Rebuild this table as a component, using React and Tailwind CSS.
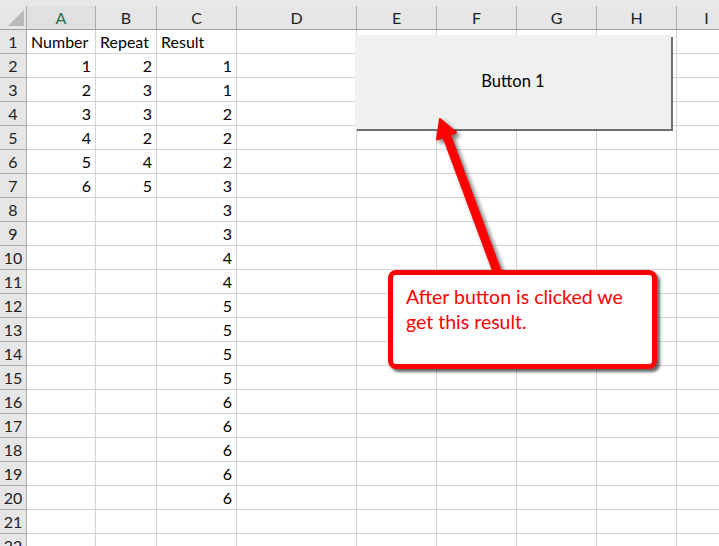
import React from 'react';

const cols = [
  { key: 'A', w: 'w-[69px]' },
  { key: 'B', w: 'w-[61px]' },
  { key: 'C', w: 'w-[80px]' },
  { key: 'D', w: 'w-[120px]' },
  { key: 'E', w: 'w-[80px]' },
  { key: 'F', w: 'w-[80px]' },
  { key: 'G', w: 'w-[80px]' },
  { key: 'H', w: 'w-[80px]' },
  { key: 'I', w: 'w-[60px]' },
];

const aVals = [1, 2, 3, 4, 5, 6];
const bVals = [2, 3, 3, 2, 4, 5];
const results = [1, 1, 2, 2, 2, 3, 3, 3, 4, 4, 5, 5, 5, 5, 6, 6, 6, 6, 6];

// build cell contents per row
const rows = Array.from({ length: 22 }, (_, i) => {
  const n = i + 1;
  if (n === 1) return { n, cells: { A: 'Number', B: 'Repeat', C: 'Result' }, header: true };
  const cells = {};
  if (n <= 7) {
    cells.A = aVals[n - 2];
    cells.B = bVals[n - 2];
  }
  if (n <= 20) cells.C = results[n - 2];
  return { n, cells };
});

const CornerTriangle = () => (
  <svg width="16" height="16" viewBox="0 0 16 16" className="absolute left-[8px] top-[4px]">
    <polygon points="16,0 16,16 0,16" fill="#b9b9b9" />
  </svg>
);

const Arrow = () => (
  <svg
    width="719"
    height="546"
    className="absolute left-0 top-0 pointer-events-none drop-shadow-[3px_3px_2px_rgba(0,0,0,0.55)]"
  >
    <line x1="446" y1="134" x2="498" y2="274" stroke="#ff0000" strokeWidth="9" />
    <polygon points="440,119 456,132.5 437,139.5" fill="#ff0000" stroke="#ff0000" strokeWidth="2" strokeLinejoin="round" />
  </svg>
);

export default function App() {
  return (
    <div className="relative w-[719px] h-[546px] overflow-hidden bg-white font-['Lato',_'Liberation_Sans',_sans-serif] text-[16px] text-black">
      {/* top strip */}
      <div className="h-[6px] bg-[#e8e8e8]" />

      {/* column headers */}
      <div className="flex h-[24px] bg-[#e6e6e6] border-b border-[#9e9e9e]">
        <div className="relative w-[27px] shrink-0 border-r border-[#ababab]">
          <CornerTriangle />
        </div>
        {cols.map((c) => (
          <div
            key={c.key}
            className={`${c.w} shrink-0 border-r border-[#ababab] flex items-center justify-center leading-none ${c.key === 'A' ? 'text-[#217346] bg-[#e0e0e0]' : 'text-[#222]'}`}
          >
            {c.key}
          </div>
        ))}
      </div>

      {/* rows */}
      {rows.map((r) => (
        <div key={r.n} className="flex h-[24px]">
          <div className="w-[27px] shrink-0 bg-[#e6e6e6] border-r border-b border-[#ababab] flex items-center pl-[2px] text-[#222] leading-none">
            <span className="w-[22px] text-center">{r.n}</span>
          </div>
          {cols.map((c) => {
            const v = r.cells[c.key];
            return (
              <div
                key={c.key}
                className={`${c.w} shrink-0 border-r border-b border-[#d4d4d4] flex items-center leading-none ${r.header ? 'justify-start pl-[4px]' : 'justify-end pr-[4px]'}`}
              >
                {v}
              </div>
            );
          })}
        </div>
      ))}

      {/* form button */}
      <div className="absolute left-[355px] top-[35px] w-[316px] h-[94px] bg-[#f0f0f0] shadow-[2px_2px_0_#6f6f6f] flex items-center justify-center pb-[2px]">
        <span className="text-[16.5px]">Button 1</span>
      </div>

      <Arrow />

      {/* callout */}
      <div className="absolute left-[388px] top-[270px] w-[269px] h-[99px] bg-white border-[5px] border-[#ff0000] rounded-[8px] shadow-[3px_3px_3px_rgba(0,0,0,0.6)] pl-[13px] pt-[9px] text-[#ff0000] text-[19.5px] leading-[25px]">
        After button is clicked we
        <br />
        get this result.
      </div>
    </div>
  );
}
